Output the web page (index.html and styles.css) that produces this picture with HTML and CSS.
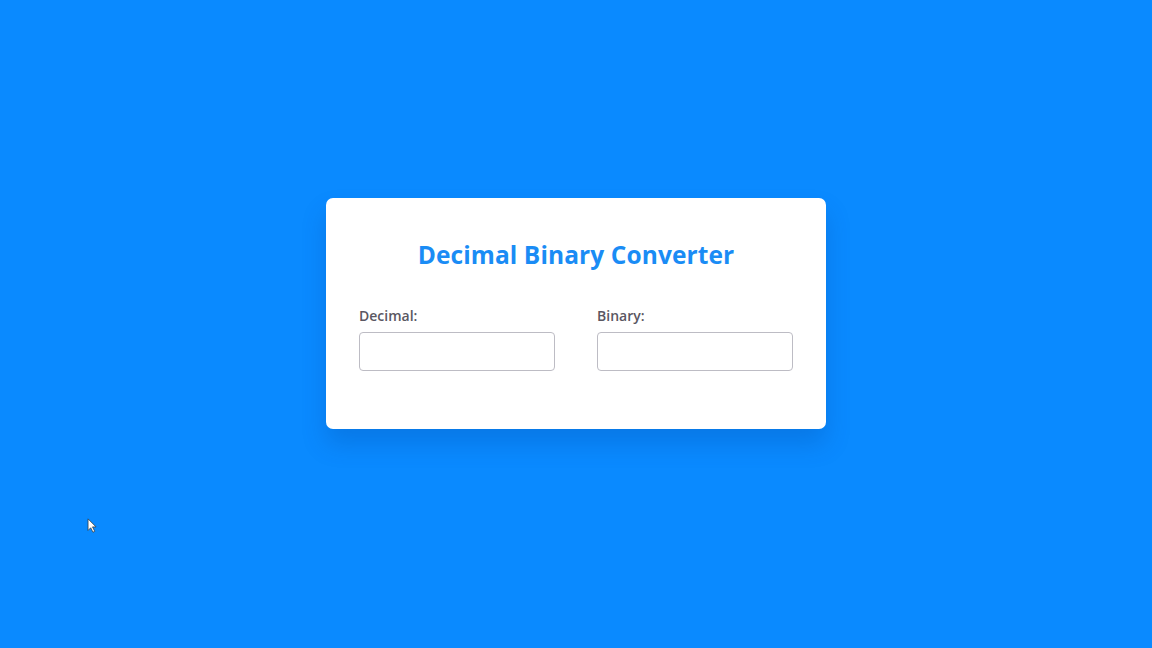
FILE: index.html
```html
<!DOCTYPE html>
<html lang="en">
<head>
<meta charset="utf-8">
<title>Decimal Binary Converter</title>
<link rel="stylesheet" href="styles.css">
</head>
<body>
<main class="page">
  <section class="card">
    <h1 class="title">Decimal Binary Converter</h1>
    <div class="fields">
      <div class="field">
        <label class="label" for="dec">Decimal:</label>
        <input class="input" id="dec" type="text">
      </div>
      <div class="field">
        <label class="label" for="bin">Binary:</label>
        <input class="input" id="bin" type="text">
      </div>
    </div>
  </section>
</main>
<svg class="cursor" width="11" height="16" viewBox="0 0 12 18"><path d="M1 1 L1 14 L4 11 L6.5 16 L8.5 15 L6 10 L10 10 Z" fill="#fff" stroke="#333" stroke-width="0.8"/></svg>
</body>
</html>
```
FILE: styles.css
```css
* { box-sizing: border-box; }
html, body { margin: 0; height: 100%; }
body {
  background: #0a8aff;
  font-family: "Open Sans", "Liberation Sans", sans-serif;
}
.page {
  height: 100%;
  display: flex;
  align-items: center;
  justify-content: center;
  padding-bottom: 21px;
}
.card {
  width: 500px;
  height: 231px;
  background: #fff;
  border-radius: 7px;
  padding: 39px 33px 0;
  box-shadow: 0 15px 25px rgba(0, 60, 140, 0.22);
}
.title {
  margin: 0;
  text-align: center;
  color: #1a8cf5;
  font-size: 24.5px;
  font-weight: 700;
  line-height: 36px;
  letter-spacing: 0.1px;
}
.fields {
  display: flex;
  gap: 42px;
  margin-top: 33px;
}
.field {
  display: flex;
  flex-direction: column;
  width: 196px;
}
.label {
  color: #5a5762;
  font-size: 14px;
  font-weight: 600;
  line-height: 19px;
  margin-bottom: 7px;
}
.input {
  width: 196px;
  height: 39px;
  border: 1.5px solid #bdbcc4;
  border-radius: 4px;
  background: #fff;
  outline: none;
}
.cursor {
  position: absolute;
  left: 87px;
  top: 518px;
}
```
